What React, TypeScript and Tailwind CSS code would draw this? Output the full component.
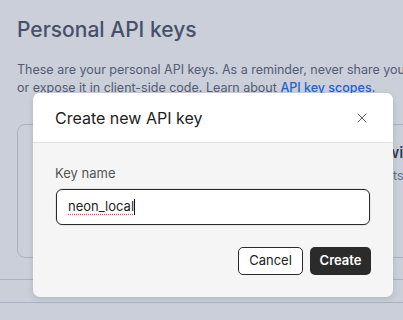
import { X } from 'lucide-react'

export default function App() {
  return (
    <div className="relative h-[320px] w-[403px] overflow-hidden bg-white font-['Inter',sans-serif]">
      {/* page behind the dialog */}
      <div className="pt-[16px]">
        <h1 className="px-[17px] text-[21px] font-medium leading-[28px] text-[#50566a]">
          Personal API keys
        </h1>
        <p className="mt-[17px] whitespace-nowrap px-[17px] text-[12.5px] leading-[18px] text-[#60667a]">
          These are your personal API keys. As a reminder, never share your
          <br />
          or expose it in client-side code. Learn about{' '}
          <span className="font-medium text-[#1670f5]">API key scopes</span>.
        </p>
        <div className="mt-[27px] ml-[17px] h-[134px] w-[420px] rounded-[8px] border border-[#d3d7df] pt-[15px] pl-[368px]">
          <div className="whitespace-nowrap text-[16px] font-medium text-[#2c2f38]">with</div>
          <div className="mt-[3px] ml-[7px] whitespace-nowrap text-[12.5px] text-[#7a7f8c]">ts</div>
        </div>
        <div className="mt-[21px] border-t border-[#d3d7df]" />
        <div className="mt-[22px] border-t border-[#d3d7df]" />
      </div>

      {/* overlay */}
      <div className="absolute inset-0 bg-[#2f3f67]/25" />

      {/* dialog */}
      <div className="absolute top-[93px] left-[33px] w-[360px] overflow-hidden rounded-[7px] bg-[#f5f5f5] shadow-[0_2px_6px_rgba(0,0,0,0.12)]">
        <div className="flex h-[50px] items-center justify-between border-b border-[#e3e3e3] bg-white pr-[23px] pl-[22px]">
          <h2 className="text-[16px] leading-none text-[#222]">Create new API key</h2>
          <X size={16} strokeWidth={1.3} className="text-[#444]" />
        </div>
        <div className="px-[22px] pt-[22px] pb-[22px]">
          <label className="block text-[13px] leading-[16px] text-[#555]">Key name</label>
          <div className="mt-[7px] rounded-[8px] bg-[#e6e6e6] p-[1px]">
            <div className="flex h-[36px] items-center rounded-[6px] border border-[#2a2a2a] bg-white px-[11px]">
              <span className="text-[13px] text-[#1c1c1c] underline decoration-[#e05252] decoration-dotted underline-offset-[3px]">
                neon_local
              </span>
              <span className="h-[16px] w-[1px] bg-[#111]" />
            </div>
          </div>
          <div className="mt-[21px] flex justify-end gap-[7px]">
            <button className="h-[28px] w-[65px] rounded-[5px] border border-[#2a2a2a] bg-white text-[13px] text-[#222]">
              Cancel
            </button>
            <button className="h-[28px] w-[61px] rounded-[5px] bg-[#2b2b2b] text-[13px] font-semibold text-white">
              Create
            </button>
          </div>
        </div>
      </div>
    </div>
  )
}
